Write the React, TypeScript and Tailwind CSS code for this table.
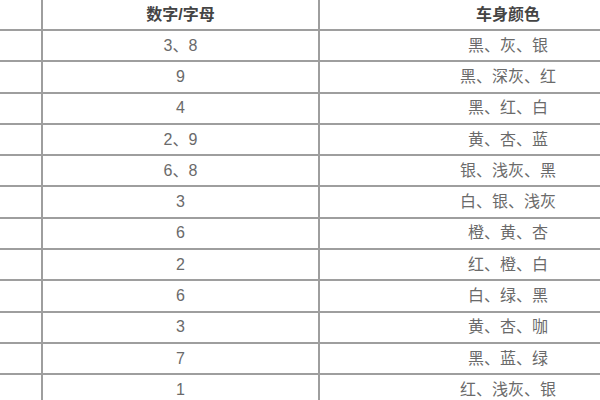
const rows: [string, string][] = [
  ["3、8", "黑、灰、银"],
  ["9", "黑、深灰、红"],
  ["4", "黑、红、白"],
  ["2、9", "黄、杏、蓝"],
  ["6、8", "银、浅灰、黑"],
  ["3", "白、银、浅灰"],
  ["6", "橙、黄、杏"],
  ["2", "红、橙、白"],
  ["6", "白、绿、黑"],
  ["3", "黄、杏、咖"],
  ["7", "黑、蓝、绿"],
  ["1", "红、浅灰、银"],
];

const cell = "border border-[#9e9e9e] text-center align-middle";

export default function App() {
  return (
    <div
      className="h-[400px] w-[600px] overflow-hidden bg-white"
      style={{ fontFamily: '"Liberation Sans", "Noto Sans CJK SC", sans-serif' }}
    >
      <table className="w-[697px] table-fixed border-separate border-spacing-0 text-[16px] leading-none text-[#6a6a6a]">
        <colgroup>
          <col className="w-[42px]" />
          <col className="w-[277px]" />
          <col className="w-[378px]" />
        </colgroup>
        <thead>
          <tr className="h-[30px]">
            <th className="border-r border-b border-[#9e9e9e]" />
            <th className="border-x border-b border-[#9e9e9e] font-bold text-[#444]">数字/字母</th>
            <th className="border-x border-b border-[#9e9e9e] font-bold text-[#444]">车身颜色</th>
          </tr>
        </thead>
        <tbody>
          {rows.map(([num, color], i) => (
            <tr key={i} className="h-[31.3px]">
              <td className="border-y border-r border-[#9e9e9e]" />
              <td className={cell}>{num}</td>
              <td className={cell}>{color}</td>
            </tr>
          ))}
        </tbody>
      </table>
    </div>
  );
}
